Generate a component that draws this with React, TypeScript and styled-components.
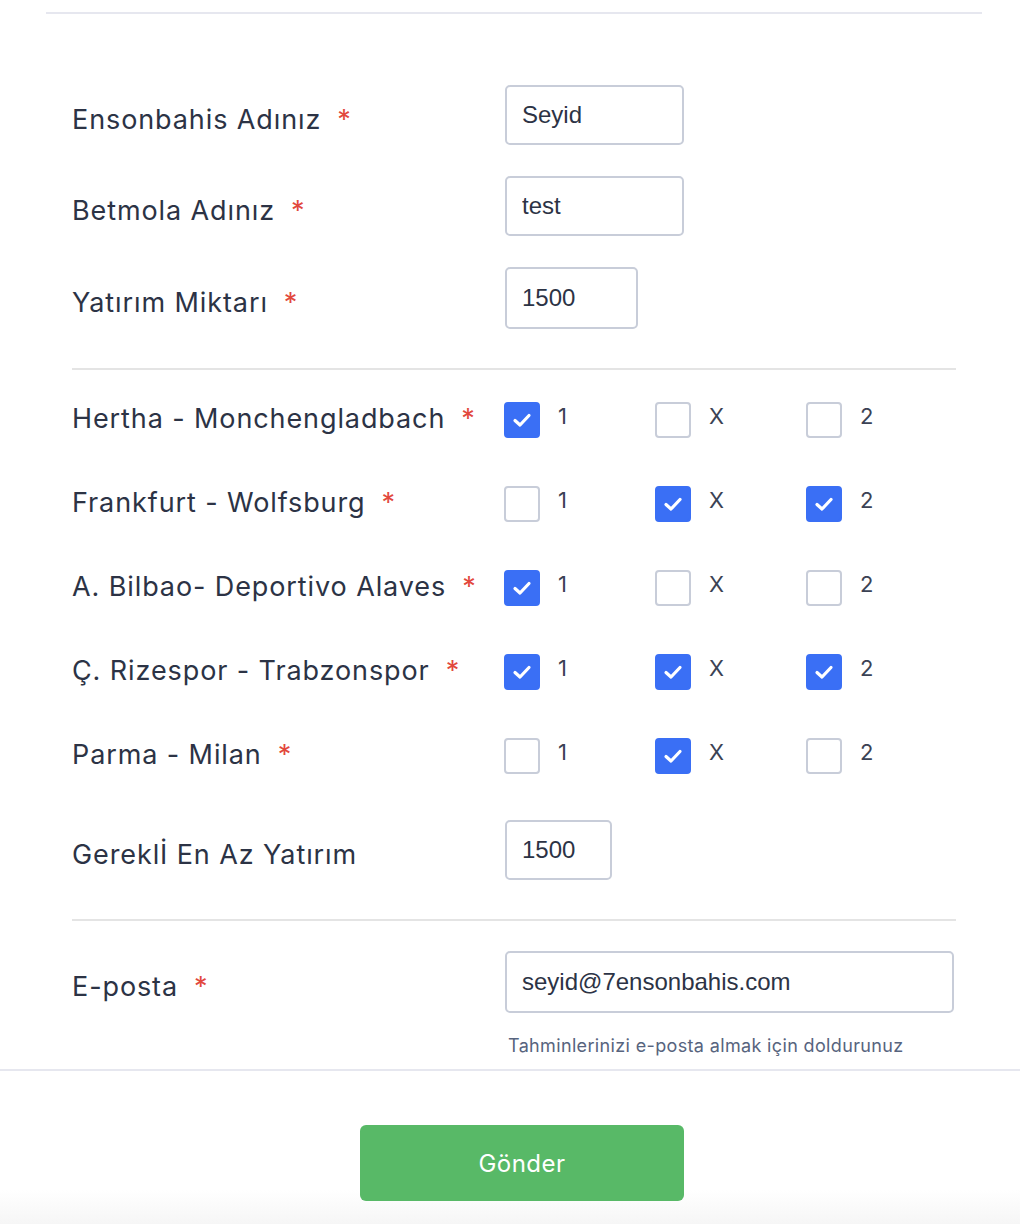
import * as React from "react";
import styled, { createGlobalStyle } from "styled-components";

const GlobalStyle = createGlobalStyle`
  html, body {
    margin: 0;
    padding: 0;
    background: #ffffff;
  }
  body {
    font-family: Inter, "Noto Sans", sans-serif;
    color: #2c3345;
  }
`;

const Page = styled.div`
  width: 1020px;
  height: 1224px;
  overflow: hidden;
  background: linear-gradient(to bottom, #ffffff 0, #ffffff 1190px, #f6f6f6 1224px);
`;

const TopRule = styled.div`
  margin: 12px 38px 0 46px;
  height: 2px;
  background: #e6e7ef;
`;

const Form = styled.div`
  padding: 71px 64px 0 72px;
`;

const Section = styled.div<{ $gap: number }>`
  display: flex;
  flex-direction: column;
  gap: ${(p) => p.$gap}px;
`;

const Row = styled.div<{ $h: number }>`
  display: flex;
  align-items: center;
  height: ${(p) => p.$h}px;
`;

const Label = styled.div`
  width: 433px;
  flex: none;
  font-size: 27px;
  letter-spacing: 0.9px;
  color: #2c3345;
  padding-top: 8px;
  white-space: nowrap;
`;

const CheckLabel = styled(Label)`
  padding-top: 0;
  margin-top: -3px;
`;

const Star = styled.span`
  color: #e2483d;
  margin-left: 16px;
`;

const Input = styled.input<{ $w: number }>`
  box-sizing: border-box;
  width: ${(p) => p.$w}px;
  height: 100%;
  border: 2px solid #c8cdd9;
  border-radius: 5px;
  padding: 0 0 0 15px;
  font-family: "Liberation Sans", Arial, sans-serif;
  font-size: 24px;
  color: #2c3345;
  background: #fff;
  outline: none;
`;

const Divider = styled.div<{ $top: number; $bottom: number }>`
  height: 2px;
  background: #e4e4e4;
  margin: ${(p) => p.$top}px 0 ${(p) => p.$bottom}px;
`;

const Options = styled.div`
  display: flex;
  margin-left: -1px;
`;

const Option = styled.label`
  display: flex;
  align-items: center;
  width: 151px;
  gap: 18px;
  font-size: 22px;
  color: #3b4254;
`;

const OptionText = styled.span`
  margin-top: -8px;
`;

const Box = styled.span<{ $checked: boolean }>`
  box-sizing: border-box;
  width: 36px;
  height: 36px;
  border-radius: 4px;
  display: flex;
  align-items: center;
  justify-content: center;
  border: 2px solid ${(p) => (p.$checked ? "#3a6ff5" : "#c8cdd9")};
  background: ${(p) => (p.$checked ? "#3a6ff5" : "#fff")};
`;

const EmailBlock = styled.div`
  display: flex;
  flex-direction: column;
`;

const Help = styled.div`
  margin: 22px 0 0 436px;
  font-size: 18px;
  color: #57647e;
  letter-spacing: 0.35px;
`;

const BottomRule = styled.div`
  margin-top: 13px;
  height: 2px;
  background: #e6e7ef;
`;

const Footer = styled.div`
  display: flex;
  justify-content: center;
  padding: 54px 0 0 24px;
`;

const Button = styled.button`
  width: 324px;
  height: 76px;
  border: none;
  border-radius: 6px;
  background: #58b967;
  color: #ffffff;
  font-family: Inter, "Noto Sans", sans-serif;
  font-size: 24px;
  letter-spacing: 0.5px;
  cursor: pointer;
`;

type Match = { name: string; picks: boolean[] };

const matches: Match[] = [
  { name: "Hertha - Monchengladbach", picks: [true, false, false] },
  { name: "Frankfurt - Wolfsburg", picks: [false, true, true] },
  { name: "A. Bilbao- Deportivo Alaves", picks: [true, false, false] },
  { name: "Ç. Rizespor - Trabzonspor", picks: [true, true, true] },
  { name: "Parma - Milan", picks: [false, true, false] },
];

const optionNames = ["1", "X", "2"];

function Check({ checked }: { checked: boolean }) {
  return (
    <Box $checked={checked}>
      {checked && (
        <svg width="24" height="24" viewBox="0 0 24 24" fill="none">
          <path
            d="M5 12.5 L10 17 L19 7.5"
            stroke="#fff"
            strokeWidth="3.2"
            strokeLinecap="round"
            strokeLinejoin="round"
          />
        </svg>
      )}
    </Box>
  );
}

export default function App() {
  return (
    <Page>
      <GlobalStyle />
      <TopRule />
      <Form>
        <Section $gap={31}>
          <Row $h={60}>
            <Label>
              Ensonbahis Adınız<Star>*</Star>
            </Label>
            <Input $w={179} defaultValue="Seyid" />
          </Row>
          <Row $h={60}>
            <Label>
              Betmola Adınız<Star>*</Star>
            </Label>
            <Input $w={179} defaultValue="test" />
          </Row>
          <Row $h={62}>
            <Label>
              Yatırım Miktarı<Star>*</Star>
            </Label>
            <Input $w={133} defaultValue="1500" />
          </Row>
        </Section>

        <Divider $top={39} $bottom={32} />

        <Section $gap={48}>
          {matches.map((m) => (
            <Row $h={36} key={m.name}>
              <CheckLabel>
                {m.name}
                <Star>*</Star>
              </CheckLabel>
              <Options>
                {m.picks.map((on, i) => (
                  <Option key={optionNames[i]}>
                    <Check checked={on} />
                    <OptionText>{optionNames[i]}</OptionText>
                  </Option>
                ))}
              </Options>
            </Row>
          ))}
        </Section>

        <Section $gap={0} style={{ marginTop: 46 }}>
          <Row $h={60}>
            <Label>Gerekl&#304; En Az Yatırım</Label>
            <Input $w={107} defaultValue="1500" />
          </Row>
        </Section>

        <Divider $top={39} $bottom={30} />

        <EmailBlock>
          <Row $h={62}>
            <Label>
              E-posta<Star>*</Star>
            </Label>
            <Input $w={449} defaultValue="seyid@7ensonbahis.com" />
          </Row>
          <Help>Tahminlerinizi e-posta almak için doldurunuz</Help>
        </EmailBlock>
      </Form>
      <BottomRule />
      <Footer>
        <Button>Gönder</Button>
      </Footer>
    </Page>
  );
}
